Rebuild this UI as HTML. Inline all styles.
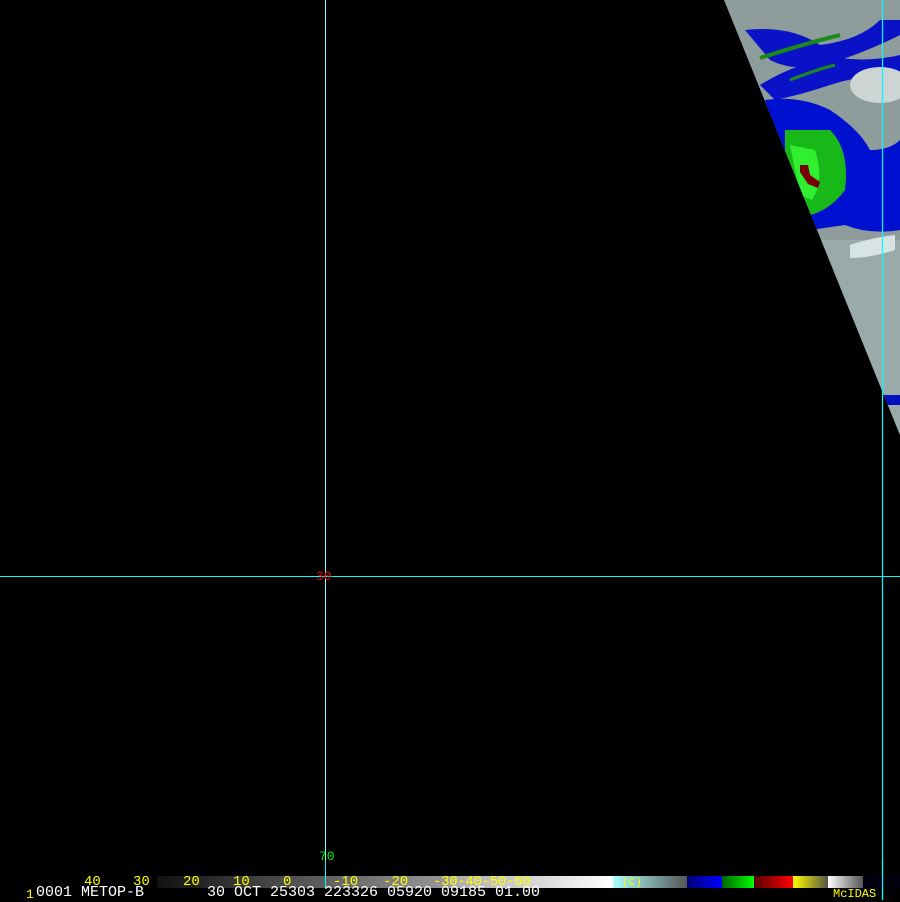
<!DOCTYPE html>
<html><head><style>
body{margin:0;background:#000;width:900px;height:900px;overflow:hidden;position:relative;font-family:"Liberation Mono",monospace}
.t{position:absolute;font-size:15px;line-height:14px;letter-spacing:0;white-space:pre}
</style></head><body>
<svg width="900" height="900" style="position:absolute;left:0;top:0">
<defs>
<linearGradient id="g1" x1="0" x2="1"><stop offset="0" stop-color="#111"/><stop offset="1" stop-color="#9a9a9a"/></linearGradient>
<linearGradient id="g2" x1="0" x2="1"><stop offset="0" stop-color="#aaa"/><stop offset="1" stop-color="#fff"/></linearGradient>
<linearGradient id="g3" x1="0" x2="1"><stop offset="0" stop-color="#aff"/><stop offset="1" stop-color="#555"/></linearGradient>
<linearGradient id="g4" x1="0" x2="1"><stop offset="0" stop-color="#007"/><stop offset="1" stop-color="#00f"/></linearGradient>
<linearGradient id="g5" x1="0" x2="1"><stop offset="0" stop-color="#060"/><stop offset="1" stop-color="#0f0"/></linearGradient>
<linearGradient id="g6" x1="0" x2="1"><stop offset="0" stop-color="#500"/><stop offset="1" stop-color="#f00"/></linearGradient>
<linearGradient id="g7" x1="0" x2="1"><stop offset="0" stop-color="#ff0"/><stop offset="1" stop-color="#554"/></linearGradient>
<linearGradient id="g8" x1="0" x2="1"><stop offset="0" stop-color="#fff"/><stop offset="1" stop-color="#555"/></linearGradient>
<clipPath id="sw"><polygon points="724,0 900,0 900,435"/></clipPath>
</defs>
<g clip-path="url(#sw)">
<rect x="700" y="0" width="200" height="440" fill="#8e9c9c"/>
<rect x="700" y="240" width="200" height="200" fill="#9aaaaa"/>
<path d="M745 30 Q790 25 820 45 Q860 40 880 20 L900 20 L900 35 Q870 50 840 60 Q800 75 770 60Z" fill="#0a12c8"/>
<path d="M760 85 Q800 60 840 58 Q870 62 900 55 L900 75 Q860 75 830 85 Q800 95 775 100Z" fill="#0a12c8"/>
<ellipse cx="880" cy="85" rx="30" ry="18" fill="#ccd4d4"/>
<path d="M765 100 Q800 95 830 110 Q860 130 870 150 Q890 150 900 140 L900 230 Q870 235 845 225 L810 230 L780 150Z" fill="#0010d0"/>
<path d="M785 130 L830 130 Q850 150 845 190 Q830 210 810 215 L785 170Z" fill="#18b818"/>
<path d="M790 145 L815 150 Q825 180 812 200 L800 195Z" fill="#30ee30"/>
<path d="M800 165 L808 165 L810 175 L820 182 L818 188 L808 184 L800 172Z" fill="#700"/>
<path d="M760 58 Q800 45 840 35" stroke="#1a8a1a" stroke-width="4" fill="none"/>
<path d="M790 80 Q815 70 835 65" stroke="#1a8a1a" stroke-width="3" fill="none"/>
<path d="M850 245 Q870 238 895 235 L895 250 Q870 258 850 258Z" fill="#d8e4e4"/>
<rect x="880" y="395" width="20" height="10" fill="#0010c0"/>
</g>
<line x1="325.5" y1="0" x2="325.5" y2="870" stroke="#8ff" stroke-width="1"/>
<line x1="882.5" y1="0" x2="882.5" y2="900" stroke="#0ff" stroke-width="1.2"/>
<line x1="0" y1="576.5" x2="900" y2="576.5" stroke="#0ff" stroke-width="1"/>
<rect x="157" y="876" width="293" height="12" fill="url(#g1)"/>
<rect x="450" y="876" width="163" height="12" fill="url(#g2)"/>
<rect x="613" y="876" width="74" height="12" fill="url(#g3)"/>
<rect x="687" y="876" width="35" height="12" fill="url(#g4)"/>
<rect x="722" y="876" width="32" height="12" fill="url(#g5)"/>
<rect x="754" y="876" width="39" height="12" fill="url(#g6)"/>
<rect x="793" y="876" width="35" height="12" fill="url(#g7)"/>
<rect x="828" y="876" width="35" height="12" fill="url(#g8)"/>
<rect x="863" y="876" width="37" height="12" fill="#001"/>
<line x1="882.5" y1="860" x2="882.5" y2="900" stroke="#0ff" stroke-width="1.2"/>
<line x1="325.5" y1="860" x2="325.5" y2="888" stroke="#0ff" stroke-width="1"/>
</svg>
<div class="t" style="left:316px;top:570px;color:#e00;font-size:13px">30</div>
<div class="t" style="left:319px;top:850px;color:#0e0;font-size:13px">70</div>
<div class="t" style="left:84px;top:875px;color:#ff0;font-size:14px">40</div>
<div class="t" style="left:133px;top:875px;color:#ff0;font-size:14px">30</div>
<div class="t" style="left:183px;top:875px;color:#ff0;font-size:14px">20</div>
<div class="t" style="left:233px;top:875px;color:#ff0;font-size:14px">10</div>
<div class="t" style="left:283px;top:875px;color:#ff0;font-size:14px">0</div>
<div class="t" style="left:333px;top:875px;color:#ff0;font-size:14px">-10</div>
<div class="t" style="left:383px;top:875px;color:#ff0;font-size:14px">-20</div>
<div class="t" style="left:433px;top:875px;color:#ff0;font-size:14px;letter-spacing:-0.3px">-30-40-50-60</div>
<div class="t" style="left:622px;top:876px;color:#ff0;font-size:11px">(C)</div>
<div class="t" style="left:26px;top:888px;color:#ff0;font-size:13px">1</div>
<div class="t" style="left:36px;top:886px;color:#fff">0001 METOP-B</div>
<div class="t" style="left:207px;top:886px;color:#fff">30 OCT 25303 223326 05920 09185 01.00</div>
<div class="t" style="left:833px;top:887px;color:#ff0;font-size:12px">McIDAS</div>
</body></html>
